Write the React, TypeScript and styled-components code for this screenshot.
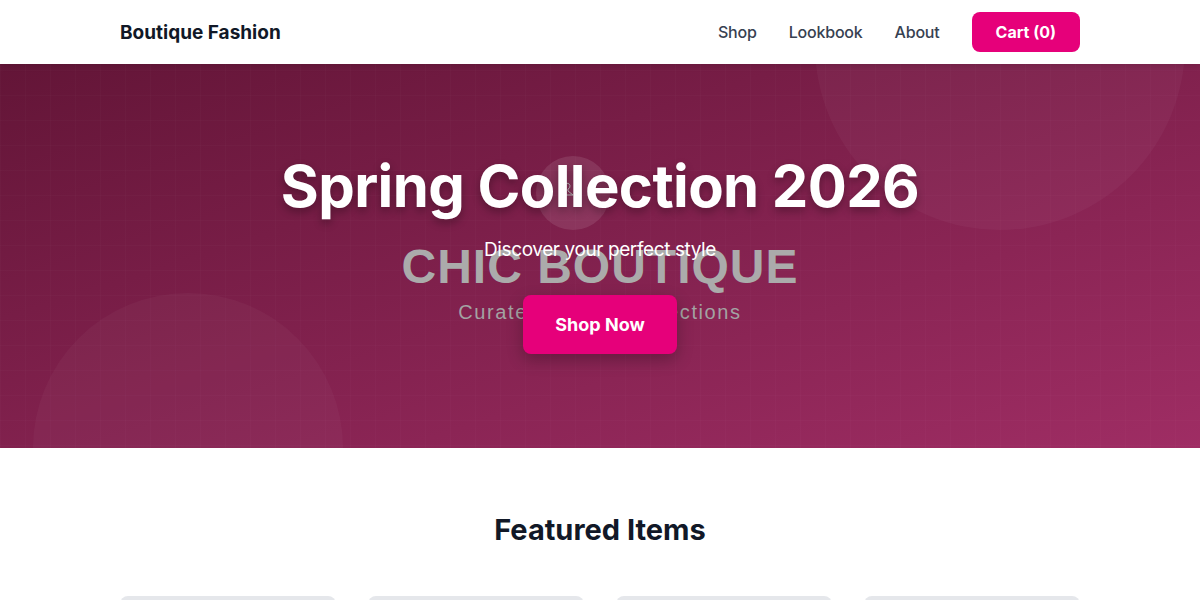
import styled, { createGlobalStyle } from "styled-components";

const Global = createGlobalStyle`
  * { box-sizing: border-box; }
  body {
    margin: 0;
    font-family: Inter, "Noto Sans", sans-serif;
    background: #ffffff;
    color: #111827;
  }
`

const Nav = styled.header`
  height: 64px;
  background: #ffffff;
  box-shadow: 0 2px 6px rgba(0, 0, 0, 0.12);
  position: relative;
  z-index: 2;
`

const Container = styled.div`
  width: 960px;
  margin: 0 auto;
`

const NavInner = styled(Container)`
  height: 100%;
  display: flex;
  align-items: center;
  justify-content: space-between;
`

const Logo = styled.div`
  font-size: 19px;
  font-weight: 700;
  color: #111827;
`

const Links = styled.nav`
  display: flex;
  align-items: center;
  gap: 32px;
  a {
    font-size: 16px;
    font-weight: 500;
    letter-spacing: -0.2px;
    color: #374151;
    text-decoration: none;
  }
`

const CartBtn = styled.button`
  height: 40px;
  padding: 0 24px;
  border: 0;
  border-radius: 8px;
  background: #e6007a;
  color: #ffffff;
  font-family: inherit;
  font-size: 16px;
  font-weight: 700;
`

const Hero = styled.section`
  position: relative;
  height: 384px;
  overflow: hidden;
  display: flex;
  flex-direction: column;
  align-items: center;
  justify-content: center;
  text-align: center;
  color: #ffffff;
`

const Backdrop = styled.svg`
  position: absolute;
  inset: 0;
  width: 100%;
  height: 100%;
  z-index: 0;
`

const HeroContent = styled.div`
  position: relative;
  z-index: 1;
  display: flex;
  flex-direction: column;
  align-items: center;
  padding-bottom: 6px;
`

const Title = styled.h1`
  margin: 0;
  font-size: 58px;
  font-weight: 700;
  letter-spacing: -0.6px;
  line-height: 1.2;
  text-shadow: 0 4px 8px rgba(0, 0, 0, 0.3);
`

const Tagline = styled.p`
  margin: 14px 0 30px;
  font-size: 19px;
  letter-spacing: -0.4px;
  line-height: 1.5;
`

const ShopBtn = styled.button`
  padding: 16px 32px;
  border: 0;
  border-radius: 8px;
  background: #e6007a;
  color: #ffffff;
  font-family: inherit;
  font-size: 18px;
  font-weight: 700;
  line-height: 27px;
  box-shadow: 0 6px 16px rgba(0, 0, 0, 0.25);
`

const Featured = styled.section`
  padding: 64px 0 0;
`

const SectionTitle = styled.h2`
  margin: 0 0 48px;
  text-align: center;
  font-size: 29px;
  font-weight: 700;
  line-height: 36px;
  color: #111827;
`

const Grid = styled(Container)`
  display: grid;
  grid-template-columns: repeat(4, 1fr);
  gap: 32px;
`

const Card = styled.div`
  height: 280px;
  border-radius: 8px;
  background: #e5e7eb;
`

function HeroArt() {
  return (
    <Backdrop viewBox="0 0 1200 384" preserveAspectRatio="none">
      <defs>
        <linearGradient id="heroBg" x1="0" y1="0" x2="1" y2="1">
          <stop offset="0" stopColor="#631537" />
          <stop offset="1" stopColor="#9f2d64" />
        </linearGradient>
        <pattern id="grid" width="25" height="25" patternUnits="userSpaceOnUse" y="6">
          <path d="M25 0H0V25" fill="none" stroke="#ffffff" strokeOpacity="0.03" strokeWidth="1" />
        </pattern>
      </defs>
      <rect width="1200" height="384" fill="url(#heroBg)" />
      <rect width="1200" height="384" fill="url(#grid)" />
      <circle cx="1000" cy="-19" r="185" fill="#ffffff" fillOpacity="0.035" />
      <circle cx="188" cy="384" r="155" fill="#ffffff" fillOpacity="0.03" />
      <circle cx="573" cy="129" r="37" fill="#ffffff" fillOpacity="0.1" />
      <path d="M564 122 a3 3 0 1 1 4 3 v2 l5 4 h-12 l5 -4" fill="none" stroke="#bdbdbd" strokeWidth="1" />
      <text x="600" y="219" textAnchor="middle" fontFamily="'Liberation Sans', Arial, sans-serif" fontWeight="700" fontSize="48" letterSpacing="1" fill="#ababab">CHIC BOUTIQUE</text>
      <text x="600" y="255" textAnchor="middle" fontFamily="'Liberation Sans', Arial, sans-serif" fontSize="20" letterSpacing="1.6" fill="#a3a3a3">Curated fashion collections</text>
    </Backdrop>
  )
}

export default function App() {
  return (
    <>
      <Global />
      <Nav>
        <NavInner>
          <Logo>Boutique Fashion</Logo>
          <Links>
            <a href="#">Shop</a>
            <a href="#">Lookbook</a>
            <a href="#">About</a>
            <CartBtn>Cart (0)</CartBtn>
          </Links>
        </NavInner>
      </Nav>
      <Hero>
        <HeroArt />
        <HeroContent>
          <Title>Spring Collection 2026</Title>
          <Tagline>Discover your perfect style</Tagline>
          <ShopBtn>Shop Now</ShopBtn>
        </HeroContent>
      </Hero>
      <Featured>
        <SectionTitle>Featured Items</SectionTitle>
        <Grid>
          <Card />
          <Card />
          <Card />
          <Card />
        </Grid>
      </Featured>
    </>
  )
}
